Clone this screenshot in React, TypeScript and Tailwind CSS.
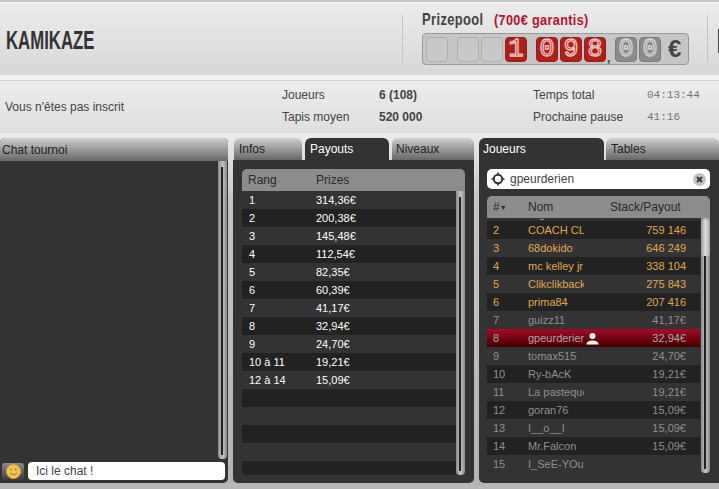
const sans = "font-['Liberation_Sans',Arial,sans-serif]";

const Tile = ({ d, kind }: { d?: string; kind: "off" | "red" | "gray" }) => (
  <div
    className={
      "w-[22px] h-[25px] rounded-[4px] border flex items-center justify-center font-['Liberation_Mono',monospace] text-[25px] leading-none text-transparent " +
      (kind === "off"
        ? "bg-[#c9c9c9] border-[#b0b0b0]"
        : kind === "red"
        ? "bg-[#ad211c] border-[#9b1d18] [-webkit-text-stroke:1.3px_#eec4c0]"
        : "bg-[#8b8b8b] border-[#7c7c7c] [-webkit-text-stroke:1.3px_#d4d4d4]")
    }
  >
    {d}
  </div>
);

const Scroll = ({ thumb }: { thumb?: boolean }) => (
  <div className="relative w-[9px] shrink-0 rounded-b-[4px] bg-gradient-to-r from-[#8a8a8a] via-[#c4c4c4] to-[#8a8a8a]">
    <div className="absolute left-[3px] top-[6px] bottom-[4px] w-[2px] bg-[#222]" />
    {thumb && <div className="absolute left-0 top-[2px] w-[9px] h-[36px] rounded-[2px] bg-gradient-to-r from-[#9a9a9a] via-[#dedede] to-[#a8a8a8]" />}
  </div>
);

const Tab = ({ label, active, w, pl }: { label: string; active?: boolean; w: string; pl: string }) => (
  <div
    className={
      `${w} ${pl} h-[22px] shrink-0 rounded-t-[6px] flex items-center text-[12px] ` +
      (active ? "bg-[#333] text-white" : "bg-gradient-to-b from-[#d0d0d0] to-[#686868] text-[#222]")
    }
  >
    {label}
  </div>
);

const prizes: [string, string][] = [
  ["1", "314,36€"],
  ["2", "200,38€"],
  ["3", "145,48€"],
  ["4", "112,54€"],
  ["5", "82,35€"],
  ["6", "60,39€"],
  ["7", "41,17€"],
  ["8", "32,94€"],
  ["9", "24,70€"],
  ["10 à 11", "19,21€"],
  ["12 à 14", "15,09€"],
  ["", ""],
  ["", ""],
  ["", ""],
  ["", ""],
  ["", ""],
];

const players: [string, string, string][] = [
  ["2", "COACH CL", "759 146"],
  ["3", "68dokido", "646 249"],
  ["4", "mc kelley jr", "338 104"],
  ["5", "Clikclikback", "275 843"],
  ["6", "prima84", "207 416"],
  ["7", "guizz11", "41,17€"],
  ["8", "gpeurderien", "32,94€"],
  ["9", "tomax515", "24,70€"],
  ["10", "Ry-bAcK", "19,21€"],
  ["11", "La pasteque", "19,21€"],
  ["12", "goran76", "15,09€"],
  ["13", "I__o__I", "15,09€"],
  ["14", "Mr.Falcon", "15,09€"],
  ["15", "I_SeE-YOu", ""],
];

export default function App() {
  return (
    <div className={`${sans} relative w-[719px] h-[489px] overflow-hidden bg-[#b8b8b8] flex flex-col`}>
      {/* top header */}
      <div className="h-[2px] bg-[#c8c8c8]" />
      <div className="h-[73px] shrink-0 flex bg-gradient-to-b from-[#ececec] to-[#d8d8d8] border-t border-[#f4f4f4]">
        <div className="w-[402px] pt-[22px] pl-[6px]">
          <div className="origin-left scale-x-[0.645] whitespace-nowrap font-bold text-[26px] leading-[30px] text-[#333]">KAMIKAZE</div>
        </div>
        <div className="w-px h-[47px] mt-[12px] bg-[#c4c4c4] shrink-0" />
        <div className="w-[304px] pl-[19px] pt-[8px]">
          <div className="flex items-start font-bold h-[22px] leading-[20px] -mt-[1px] mb-[1px]">
            <span className="w-[72px] shrink-0 inline-block origin-left scale-x-[0.76] whitespace-nowrap text-[17px] text-[#444] tracking-[0.5px]">Prizepool</span>
            <span className="inline-block origin-left scale-x-[0.82] whitespace-nowrap text-[15.5px] text-[#b5122e] tracking-[0.4px]">(700€ garantis)</span>
          </div>
          <div className="w-[267px] h-[32px] rounded-[4px] border border-[#9a9a9a] bg-[#c6c6c6] flex items-center pl-[3px]">
            <Tile kind="off" />
            <div className="w-[9px]" />
            <Tile kind="off" />
            <div className="w-[2px]" />
            <Tile kind="off" />
            <div className="w-[2px]" />
            <Tile kind="red" d="1" />
            <div className="w-[9px]" />
            <Tile kind="red" d="0" />
            <div className="w-[2px]" />
            <Tile kind="red" d="9" />
            <div className="w-[2px]" />
            <Tile kind="red" d="8" />
            <div className="w-[9px] text-[12px] font-bold text-[#444] self-end pl-[1px] leading-[12px]">,</div>
            <Tile kind="gray" d="0" />
            <div className="w-[2px]" />
            <Tile kind="gray" d="0" />
            <span className="ml-[7px] text-[24px] font-bold text-[#444] leading-none">€</span>
          </div>
        </div>
        <div className="w-px h-[47px] mt-[12px] bg-[#c4c4c4] shrink-0" />
        <div className="ml-[10px] w-px h-[24px] mt-[26px] bg-[#444] shrink-0" />
      </div>
      <div className="h-[6px] shrink-0 bg-[#f0f0f0] border-b border-[#cfcfcf]" />

      {/* info bar */}
      <div className="h-[52px] shrink-0 flex items-center bg-gradient-to-b from-[#ececec] to-[#dfdfdf] text-[12px] text-[#444] pb-[2px]">
        <div className="w-[282px] pl-[5px] pt-[2px]">Vous n'êtes pas inscrit</div>
        <div className="w-[97px] flex flex-col gap-[7px] leading-[15px]">
          <span>Joueurs</span>
          <span>Tapis moyen</span>
        </div>
        <div className="w-[154px] flex flex-col gap-[7px] leading-[15px] font-bold">
          <span>6 (108)</span>
          <span>520 000</span>
        </div>
        <div className="w-[114px] flex flex-col gap-[7px] leading-[15px]">
          <span>Temps total</span>
          <span>Prochaine pause</span>
        </div>
        <div className="flex flex-col gap-[7px] leading-[15px] font-['Liberation_Mono',monospace] text-[11px] text-[#777]">
          <span>04:13:44</span>
          <span>41:16</span>
        </div>
      </div>

      {/* panels */}
      <div className="flex gap-[5px] h-[351px] shrink-0 pt-[5px] bg-gradient-to-b from-[#ececec] to-[#b4b4b4] via-[#c4c4c4] via-20%">
        {/* chat */}
        <div className="w-[228px] shrink-0 bg-[#333] rounded-t-[5px] rounded-br-[5px] flex flex-col h-[345px]">
          <div className="h-[23px] shrink-0 rounded-t-[5px] bg-gradient-to-b from-[#d0d0d0] to-[#686868] flex items-center pl-[2px] text-[12px] text-[#222]">
            Chat tournoi
          </div>
          <div className="flex justify-end h-[298px] pr-px">
            <Scroll />
          </div>
          <div className="flex items-center gap-[4px] pl-[2px] pr-[3px] pt-[3px]">
            <div className="w-[22px] h-[17px] rounded-[3px] bg-gradient-to-b from-[#8c8c8c] to-[#3c3c3c] flex items-center justify-center">
              <svg width="15" height="15" viewBox="0 0 15 15">
                <circle cx="7.5" cy="7.5" r="7" fill="#f2c14e" stroke="#dba63a" />
                <circle cx="5.3" cy="5.6" r="0.8" fill="#9a6a10" />
                <circle cx="9.7" cy="5.6" r="0.8" fill="#9a6a10" />
                <path d="M4 9c1 2 6 2 7 0" fill="none" stroke="#9a6a10" strokeWidth="0.9" />
              </svg>
            </div>
            <div className="flex-1 h-[18px] rounded-[4px] bg-white text-[12px] text-[#444] pl-[8px] leading-[18px]">Ici le chat !</div>
          </div>
        </div>

        {/* payouts */}
        <div className="w-[241px] shrink-0 flex flex-col h-[345px]">
          <div className="flex pl-px gap-[3px]">
            <Tab label="Infos" w="w-[68px]" pl="pl-[5px]" />
            <Tab label="Payouts" active w="w-[84px]" pl="pl-[5px]" />
            <Tab label="Niveaux" w="w-[82px]" pl="pl-[4px]" />
          </div>
          <div className="flex-1 bg-[#333] rounded-b-[5px] px-[9px] pt-[9px]">
            <div className="w-[223px] h-[22px] rounded-t-[5px] bg-[#8c8c8c] flex items-center text-[12px] text-[#2a2a2a]">
              <span className="w-[74px] pl-[6px]">Rang</span>
              <span>Prizes</span>
            </div>
            <div className="flex h-[284px] w-[223px]">
              <div className="w-[214px] overflow-hidden rounded-bl-[4px]">
                {prizes.map(([r, p], i) => (
                  <div key={i} className={`h-[18px] flex items-center text-[11px] text-white ${i % 2 ? "bg-[#222]" : "bg-[#333]"}`}>
                    <span className="w-[74px] pl-[7px]">{r}</span>
                    <span>{p}</span>
                  </div>
                ))}
              </div>
              <Scroll />
            </div>
          </div>
        </div>

        {/* players */}
        <div className="flex-1 min-w-0 flex flex-col h-[345px]">
          <div className="flex gap-[2px]">
            <Tab label="Joueurs" active w="w-[125px]" pl="pl-[4px]" />
            <Tab label="Tables" w="w-[113px]" pl="pl-[5px]" />
          </div>
          <div className="flex-1 bg-[#333] rounded-bl-[5px] px-[8px] pt-[9px]">
            <div className="w-[223px] h-[20px] rounded-[5px] bg-white flex items-center pl-[4px] pr-[3px] text-[12px] text-[#444]">
              <svg width="14" height="14" viewBox="0 0 14 14" className="mr-[5px] shrink-0">
                <circle cx="7" cy="7" r="4.2" fill="none" stroke="#333" strokeWidth="2" />
                <path d="M7 0.5v2.5M7 11v2.5M0.5 7H3M11 7h2.5" stroke="#333" strokeWidth="1.6" />
              </svg>
              <span className="flex-1">gpeurderien</span>
              <svg width="13" height="13" viewBox="0 0 13 13" className="shrink-0 mr-[1px]">
                <circle cx="6.5" cy="6.5" r="6.5" fill="#c2c2c2" />
                <path d="M4 4l5 5M9 4l-5 5" stroke="#333" strokeWidth="1.8" />
              </svg>
            </div>
            <div className="w-[223px] h-[22px] mt-[7px] rounded-t-[5px] bg-[#8c8c8c] flex items-center text-[12px] text-[#2a2a2a]">
              <span className="w-[41px] pl-[6px]">#<span className="text-[7px] align-middle">▼</span></span>
              <span className="w-[82px]">Nom</span>
              <span>Stack/Payout</span>
            </div>
            <div className="flex h-[255px] w-[223px]">
              <div className="w-[213px] overflow-hidden">
                <div className="h-[3px] bg-[#333] pt-[1px]">
                  <div className="ml-[53px] w-[4px] h-px bg-[#a98245]" />
                </div>
                {players.map(([n, name, s], i) => (
                  <div
                    key={i}
                    className={
                      "h-[18px] flex items-center text-[11px] " +
                      (n === "8"
                        ? "bg-gradient-to-b from-[#a50d24] to-[#430000] text-[#a8a8a8]"
                        : (i % 2 ? "bg-[#333] " : "bg-[#222] ") + (i < 5 ? "text-[#e3a64c]" : "text-[#8f8f8f]"))
                    }
                  >
                    <span className="w-[41px] pl-[6px]">{n}</span>
                    <span className="w-[56px] overflow-hidden whitespace-nowrap">{name}</span>
                    <span className="w-[16px] shrink-0 flex justify-center">
                      {n === "8" && (
                        <svg width="13" height="13" viewBox="0 0 13 13">
                          <circle cx="6.5" cy="4" r="3" fill="#fff" />
                          <path d="M0.5 12.5c0-3 3-4 6-4s6 1 6 4z" fill="#fff" />
                        </svg>
                      )}
                    </span>
                    <span className="flex-1 text-right pr-[14px]">{s}</span>
                  </div>
                ))}
              </div>
              <div className="ml-px">
                <div className="h-[255px] flex"><Scroll thumb /></div>
              </div>
            </div>
          </div>
        </div>
      </div>
    </div>
  );
}
